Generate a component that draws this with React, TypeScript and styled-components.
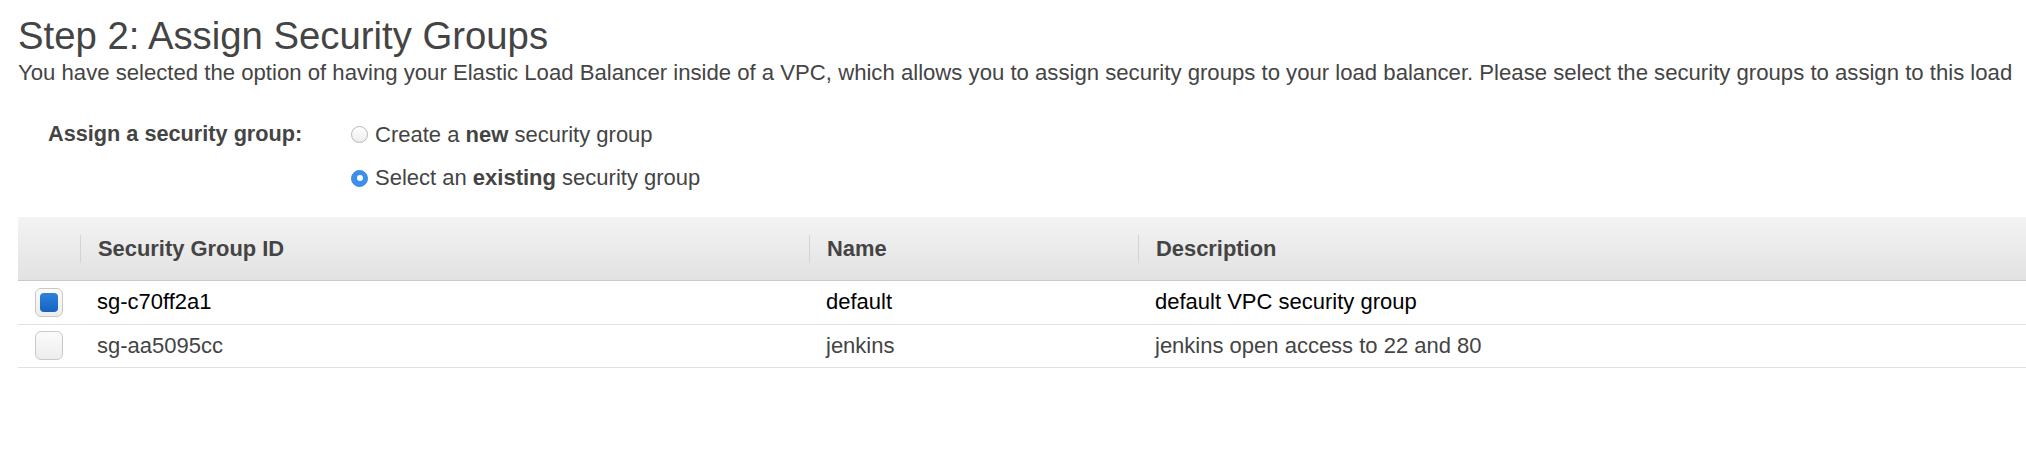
import React from 'react'
import styled, { createGlobalStyle } from 'styled-components'

const GlobalStyle = createGlobalStyle`
  html, body {
    margin: 0;
    padding: 0;
    background: #fff;
  }
  body {
    font-family: "Liberation Sans", Arial, Helvetica, sans-serif;
    color: #444;
  }
`

const Page = styled.div`
  padding: 15px 0 0 18px;
  overflow: hidden;
`

const Title = styled.h1`
  margin: 0;
  font-size: 38.3px;
  line-height: 42px;
  font-weight: 400;
  color: #444;
  white-space: nowrap;
`

const Intro = styled.p`
  margin: 3px 0 0;
  font-size: 22.15px;
  line-height: 25px;
  color: #444;
  white-space: nowrap;
`

const FormRow = styled.div`
  display: grid;
  grid-template-columns: 303px 1fr;
  margin-top: 28px;
  padding-left: 30px;
`

const FieldLabel = styled.div`
  font-size: 21.7px;
  font-weight: 700;
  line-height: 42px;
  color: #444;
`

const Options = styled.div`
  display: flex;
  flex-direction: column;
`

const Option = styled.label`
  display: flex;
  align-items: center;
  gap: 7px;
  height: 43.5px;
  font-size: 22px;
  color: #444;
  b {
    font-weight: 700;
  }
`

const Radio = styled.span<{ $checked?: boolean }>`
  width: 17px;
  height: 17px;
  flex: none;
  border-radius: 50%;
  box-sizing: border-box;
  display: flex;
  align-items: center;
  justify-content: center;
  border: 1px solid ${({ $checked }) => ($checked ? '#3a8ce8' : '#b8b8b8')};
  background: ${({ $checked }) =>
    $checked ? '#3d8fec' : 'linear-gradient(#ffffff, #ededed)'};

  &::after {
    content: '';
    display: ${({ $checked }) => ($checked ? 'block' : 'none')};
    width: 6px;
    height: 6px;
    border-radius: 50%;
    background: #fff;
  }
`

const Table = styled.div`
  margin-top: 17px;
  display: grid;
  grid-template-columns: 62px 729px 329px 1fr;
`

const HeadCell = styled.div<{ $divider?: boolean }>`
  height: 64px;
  box-sizing: border-box;
  display: flex;
  align-items: center;
  background: linear-gradient(#f3f3f3, #e2e2e2);
  border-bottom: 1px solid #c9c9c9;
  font-size: 21.9px;
  font-weight: 700;
  color: #444;
  white-space: nowrap;

  &::before {
    content: '';
    display: ${({ $divider }) => ($divider ? 'block' : 'none')};
    width: 1px;
    height: 28px;
    background: #d4d4d4;
    margin-right: 17px;
  }
`

const Cell = styled.div<{ $active?: boolean }>`
  height: 43.5px;
  box-sizing: border-box;
  display: flex;
  align-items: center;
  padding-left: 17px;
  border-bottom: 1px solid #e1e1e1;
  font-size: 22px;
  color: ${({ $active }) => ($active ? '#000' : '#444')};
  white-space: nowrap;
`

const Check = styled.span<{ $checked?: boolean }>`
  width: 28px;
  height: 29px;
  box-sizing: border-box;
  border-radius: 6px;
  border: 1px solid #c8c8c8;
  background: linear-gradient(#fbfbfb, #ededed);
  padding: 4px;
  display: flex;

  &::after {
    content: '';
    flex: 1;
    display: ${({ $checked }) => ($checked ? 'block' : 'none')};
    border-radius: 4px;
    background: linear-gradient(#2d82de, #1463bf);
  }
`

const groups = [
  { id: 'sg-c70ff2a1', name: 'default', description: 'default VPC security group', selected: true },
  { id: 'sg-aa5095cc', name: 'jenkins', description: 'jenkins open access to 22 and 80', selected: false },
]

const App: React.FC = () => {
  return (
    <>
      <GlobalStyle />
      <Page>
        <Title>Step 2: Assign Security Groups</Title>
        <Intro>
          You have selected the option of having your Elastic Load Balancer inside of a VPC, which allows you to
          assign security groups to your load balancer. Please select the security groups to assign to this load
        </Intro>

        <FormRow>
          <FieldLabel>Assign a security group:</FieldLabel>
          <Options>
            <Option>
              <Radio />
              <span>
                Create a <b>new</b> security group
              </span>
            </Option>
            <Option>
              <Radio $checked />
              <span>
                Select an <b>existing</b> security group
              </span>
            </Option>
          </Options>
        </FormRow>

        <Table>
          <HeadCell />
          <HeadCell $divider>Security Group ID</HeadCell>
          <HeadCell $divider>Name</HeadCell>
          <HeadCell $divider>Description</HeadCell>
          {groups.map((g) => (
            <React.Fragment key={g.id}>
              <Cell>
                <Check $checked={g.selected} />
              </Cell>
              <Cell $active={g.selected}>{g.id}</Cell>
              <Cell $active={g.selected}>{g.name}</Cell>
              <Cell $active={g.selected}>{g.description}</Cell>
            </React.Fragment>
          ))}
        </Table>
      </Page>
    </>
  )
}

export default App
